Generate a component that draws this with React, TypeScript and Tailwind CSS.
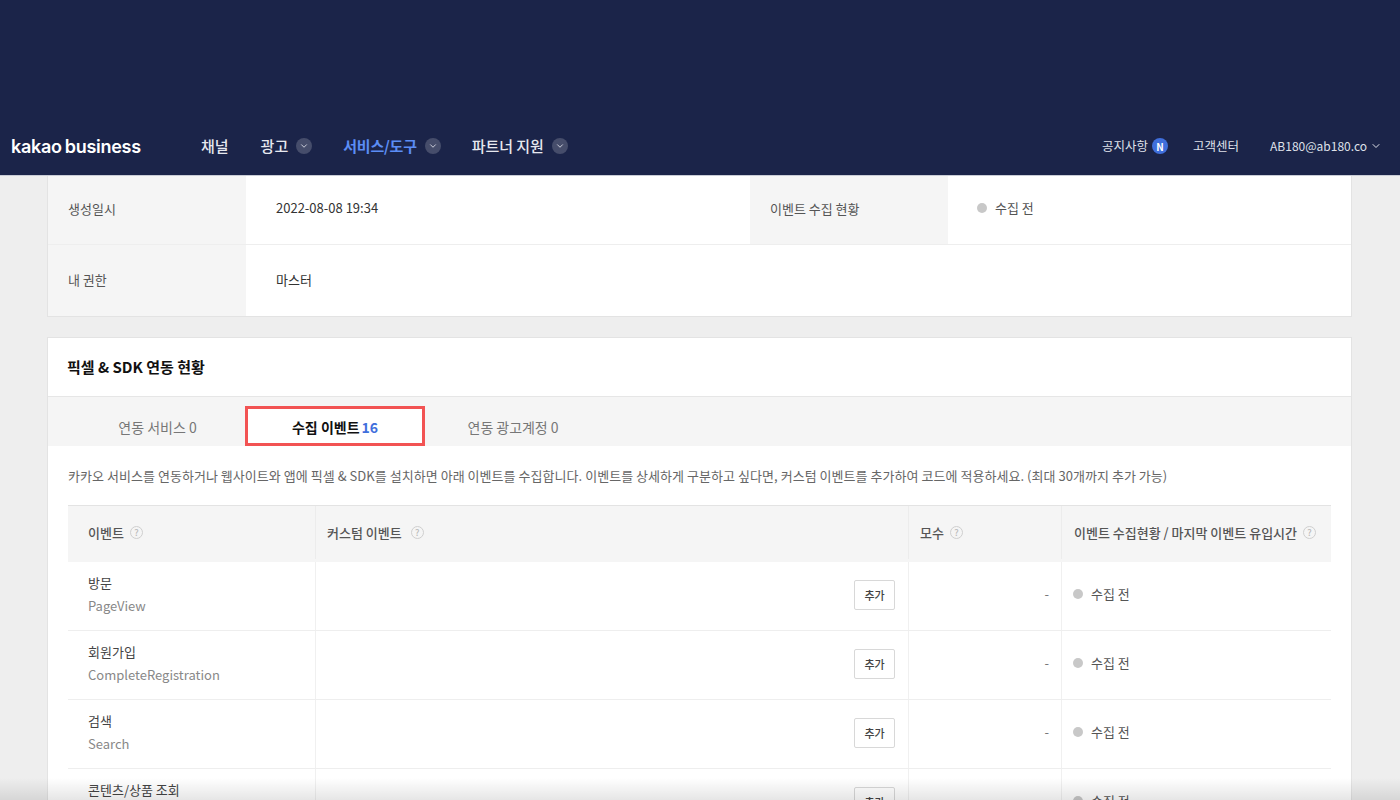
import { ChevronDown } from 'lucide-react';

const font = { fontFamily: '"Noto Sans CJK KR", "Noto Sans", sans-serif' };

const rows = [
  { name: '방문', en: 'PageView' },
  { name: '회원가입', en: 'CompleteRegistration' },
  { name: '검색', en: 'Search' },
  { name: '콘텐츠/상품 조회', en: 'ViewContent' },
];

function NavChevron() {
  return (
    <span className="ml-[8px] flex h-[16px] w-[16px] items-center justify-center rounded-full bg-[#464d6b] text-[#e4e6ee]">
      <ChevronDown size={10} strokeWidth={2} />
    </span>
  );
}

function Help() {
  return (
    <span className="ml-[6px] flex h-[13px] w-[13px] items-center justify-center rounded-full border border-[#cfcfcf] text-[9px] leading-none text-[#bbbbbb]">
      ?
    </span>
  );
}

function Status() {
  return (
    <div className="flex items-center text-[13px] text-[#555555]">
      <span className="h-[10px] w-[10px] rounded-full bg-[#c8c8c8]" />
      <span className="ml-[8px]">수집 전</span>
    </div>
  );
}

export default function App() {
  return (
    <div className="relative h-[800px] w-[1400px] overflow-hidden bg-[#eeeeee]" style={font}>
      <header className="flex h-[176px] items-end border-b border-[#c9ccd6] bg-[#1b2449] text-white">
        <div className="flex h-[60px] w-full items-center pt-[2px] pl-[11px] pr-[18px]">
          <div className="w-[190px] text-[18px] font-semibold tracking-[-0.3px] [word-spacing:-1px]" style={{ fontFamily: 'Inter, sans-serif' }}>
            kakao business
          </div>
          <nav className="flex items-center text-[15px] font-medium text-[#e6e8ef]">
            <span>채널</span>
            <span className="ml-[32px]">광고</span>
            <NavChevron />
            <span className="ml-[31px] font-bold tracking-[-0.2px] text-[#5b8df5]">서비스/도구</span>
            <NavChevron />
            <span className="ml-[31px] tracking-[-0.1px]">파트너 지원</span>
            <NavChevron />
          </nav>
          <div className="ml-auto flex items-center text-[12.5px] text-[#dfe1e9]">
            <span>공지사항</span>
            <span className="ml-[4px] flex h-[16px] w-[16px] items-center justify-center rounded-full bg-[#3f6fdc] text-[10px] font-bold text-white">N</span>
            <span className="ml-[25px]">고객센터</span>
            <span className="ml-[31px] text-[12px]">AB180@ab180.co</span>
            <ChevronDown size={12} className="ml-[3px]" />
          </div>
        </div>
      </header>

      <main className="pl-[47px]">
        <section className="w-[1305px] border-x border-b border-[#e3e3e3] bg-white text-[13px] text-[#333333]">
          <div className="flex h-[69px] border-b border-[#eeeeee]">
            <div className="flex w-[198px] items-center bg-[#f5f5f5] pb-[3px] pl-[20px] text-[#555555]">생성일시</div>
            <div className="flex w-[504px] items-center pb-[4px] pl-[30px]">2022-08-08 19:34</div>
            <div className="flex w-[198px] items-center bg-[#f5f5f5] pb-[3px] pl-[20px] text-[#555555]">이벤트 수집 현황</div>
            <div className="flex items-center pb-[4px] pl-[29px]"><Status /></div>
          </div>
          <div className="flex h-[71px]">
            <div className="flex w-[198px] items-center bg-[#f5f5f5] pb-[1px] pl-[20px] text-[#555555]">내 권한</div>
            <div className="flex items-center pb-[1px] pl-[30px]">마스터</div>
          </div>
        </section>

        <section className="mt-[20px] w-[1305px] border border-[#e3e3e3] bg-white">
          <h2 className="flex h-[59px] items-center border-b border-[#e6e6e6] pl-[19px] text-[15px] font-bold text-[#111111]">
            픽셀 &amp; SDK 연동 현황
          </h2>
          <div className="flex h-[49px] items-end bg-[#f5f5f5] text-[14px] text-[#777777]">
            <div className="flex h-[40px] w-[197px] items-center justify-center pl-[22px] pt-[3px]">연동 서비스 0</div>
            <div className="flex h-[40px] w-[180px] items-center justify-center border-[3px] border-b-[3px] border-[#f25353] bg-white pt-[2px] font-bold text-[#111111]">
              수집 이벤트<span className="ml-[2px] text-[#3f6fdc]">16</span>
            </div>
            <div className="flex h-[40px] w-[180px] items-center justify-center pr-[4px] pt-[3px] tracking-[-0.05px]">연동 광고계정 0</div>
          </div>

          <div className="pl-[20px] pr-[20px]">
            <p className="flex h-[59px] items-center whitespace-nowrap text-[13px] tracking-[0.04px] text-[#666666]">
              카카오 서비스를 연동하거나 웹사이트와 앱에 픽셀 &amp; SDK를 설치하면 아래 이벤트를 수집합니다. 이벤트를 상세하게 구분하고 싶다면, 커스텀 이벤트를 추가하여 코드에 적용하세요. (최대 30개까지 추가 가능)
            </p>

            <div className="grid h-[57px] grid-cols-[248px_593px_153px_269px] border-t border-[#e3e3e3] bg-[#f5f5f5] pb-[3px] text-[13px] font-medium text-[#555555]">
              <div className="flex items-center border-r border-[#ececec] pl-[20px]">이벤트<Help /></div>
              <div className="flex items-center border-r border-[#ececec] pl-[11px]">커스텀 이벤트<span className="ml-[3px]"><Help /></span></div>
              <div className="flex items-center border-r border-[#ececec] pl-[11px]">모수<Help /></div>
              <div className="flex items-center whitespace-nowrap pl-[12px]">이벤트 수집현황 / 마지막 이벤트 유입시간<Help /></div>
            </div>

            {rows.map((row) => (
              <div key={row.en} className="grid h-[69px] grid-cols-[248px_593px_153px_269px] border-b border-[#eeeeee]">
                <div className="flex flex-col justify-center border-r border-[#f0f0f0] pb-[4px] pl-[20px]">
                  <div className="text-[13px] leading-[22px] text-[#444444]">{row.name}</div>
                  <div className="mt-[1px] text-[13px] leading-[22px] text-[#888888]">{row.en}</div>
                </div>
                <div className="flex items-center justify-end border-r border-[#f0f0f0] pb-[2px] pr-[13px]">
                  <button className="h-[30px] w-[41px] rounded-[2px] border border-[#d8d8d8] bg-white text-[11px] font-medium text-[#444444]">추가</button>
                </div>
                <div className="flex items-center justify-end border-r border-[#f0f0f0] pb-[5px] pr-[12px] text-[13px] text-[#777777]">-</div>
                <div className="flex items-center pb-[5px] pl-[11px]"><Status /></div>
              </div>
            ))}
          </div>
        </section>
      </main>

      <div className="pointer-events-none absolute inset-x-0 bottom-0 h-[22px] bg-gradient-to-t from-black/10 to-transparent" />
    </div>
  );
}
